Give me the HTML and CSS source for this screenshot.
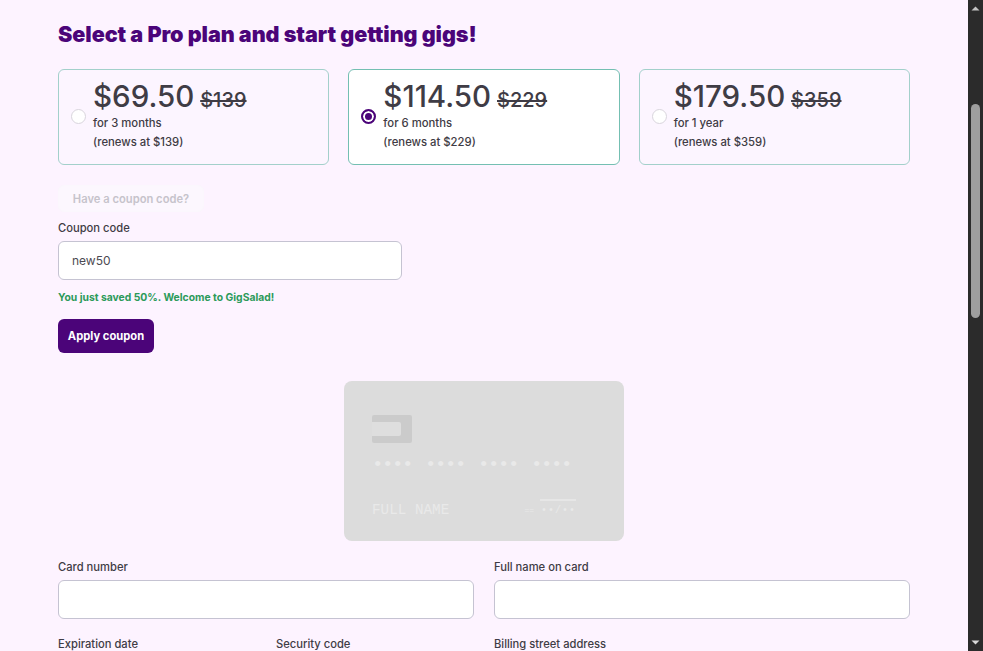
FILE: index.html
```html
<!DOCTYPE html>
<html lang="en">
<head>
  <meta charset="UTF-8">
  <title>Select a Pro plan</title>
  <link rel="stylesheet" href="styles.css">
</head>
<body>
  <div class="page">
    <main class="content">
      <h1>Select a Pro plan and start getting gigs!</h1>

      <div class="plans">
        <label class="plan">
          <span class="radio"></span>
          <span class="plan-text">
            <span class="price">$69.50 <s>$139</s></span>
            <span class="term">for 3 months</span>
            <span class="term">(renews at $139)</span>
          </span>
        </label>
        <label class="plan selected">
          <span class="radio"></span>
          <span class="plan-text">
            <span class="price">$114.50 <s>$229</s></span>
            <span class="term">for 6 months</span>
            <span class="term">(renews at $229)</span>
          </span>
        </label>
        <label class="plan">
          <span class="radio"></span>
          <span class="plan-text">
            <span class="price">$179.50 <s>$359</s></span>
            <span class="term">for 1 year</span>
            <span class="term">(renews at $359)</span>
          </span>
        </label>
      </div>

      <button class="btn-coupon-toggle">Have a coupon code?</button>

      <div class="coupon">
        <div class="label">Coupon code</div>
        <div class="input">new50</div>
        <div class="success">You just saved 50%. Welcome to GigSalad!</div>
        <button class="btn-apply">Apply coupon</button>
      </div>

      <div class="card-preview">
        <div class="chip"><span class="chip-notch"></span></div>
        <div class="card-number">
          <span>••••</span><span>••••</span><span>••••</span><span>••••</span>
        </div>
        <div class="card-bottom">
          <span class="card-name">FULL NAME</span>
          <span class="card-expiry">
            <span class="expiry-line"></span>
            <span class="expiry-row"><span class="expiry-small">==</span> ••/••</span>
          </span>
        </div>
      </div>

      <div class="fields">
        <div class="field wide">
          <div class="label">Card number</div>
          <div class="input"></div>
        </div>
        <div class="field wide">
          <div class="label">Full name on card</div>
          <div class="input"></div>
        </div>
        <div class="field">
          <div class="label">Expiration date</div>
          <div class="input"></div>
        </div>
        <div class="field">
          <div class="label">Security code</div>
          <div class="input"></div>
        </div>
        <div class="field wide">
          <div class="label">Billing street address</div>
          <div class="input"></div>
        </div>
      </div>
    </main>

    <div class="scrollbar">
      <svg class="arrow" width="15" height="17" viewBox="0 0 15 17"><path d="M3.5 10.5 7.5 6.5 11.5 10.5Z" fill="#c4c4c4"/></svg>
      <div class="track"><div class="thumb"></div></div>
      <svg class="arrow" width="15" height="17" viewBox="0 0 15 17"><path d="M3.5 6.5 7.5 10.5 11.5 6.5Z" fill="#d8d8d8"/></svg>
    </div>
  </div>
</body>
</html>
```

FILE: styles.css
```css
html, body {
  margin: 0;
  height: 100%;
  overflow: hidden;
}

body {
  font-family: Inter, 'Liberation Sans', sans-serif;
  background-color: #fdf3ff;
  color: #3f3c45;
}

.page {
  display: flex;
  height: 100vh;
  overflow: hidden;
}

.content {
  flex: 1;
  padding: 20px 58px 0;
  min-width: 0;
}

h1 {
  margin: 0 0 20px;
  color: #4b0479;
  font-size: 21.6px;
  line-height: 29px;
  font-weight: 900;
  letter-spacing: -0.08px;
}

.plans {
  display: grid;
  grid-template-columns: repeat(3, 1fr);
  gap: 19px;
}

.plan {
  display: flex;
  align-items: center;
  gap: 7px;
  height: 96px;
  box-sizing: border-box;
  padding: 0 12px;
  border: 1px solid #a3d0cb;
  border-radius: 6px;
  background-color: #fcf5ff;
}

.plan.selected {
  border-color: #74bfb2;
  background-color: #fff;
}

.radio {
  flex: none;
  width: 13px;
  height: 13px;
  margin-bottom: 2px;
  border: 1px solid #d9d5dd;
  border-radius: 50%;
  background-color: #fff;
}

.plan.selected .radio {
  border: 2px solid #4b0479;
  width: 11px;
  height: 11px;
  background-color: #4b0479;
  box-shadow: inset 0 0 0 2px #fff;
}

.plan-text {
  display: flex;
  flex-direction: column;
  margin-bottom: 3px;
}

.price {
  padding-top: 4px;
  font-size: 29.5px;
  line-height: 27px;
  font-weight: 500;
}

.price s {
  margin-left: -2px;
  font-size: 20px;
}

.term {
  font-size: 11.3px;
  line-height: 19px;
  font-weight: 500;
}

.btn-coupon-toggle {
  display: block;
  margin-top: 20px;
  height: 27px;
  width: 146px;
  padding: 0;
  border: 1px solid #fbf7fd;
  border-radius: 6px;
  background-color: #fcf7fe;
  color: #c6c3cb;
  font-family: inherit;
  font-size: 11.2px;
  font-weight: 600;
}

.coupon {
  width: 344px;
  margin-top: 8px;
}

.label {
  font-size: 11.2px;
  line-height: 16px;
  font-weight: 500;
  margin-bottom: 5px;
}

.input {
  height: 39px;
  box-sizing: border-box;
  padding: 0 13px;
  border: 1px solid #c5c3d2;
  border-radius: 6px;
  background-color: #fff;
  font-size: 12px;
  line-height: 37px;
  color: #4c4a52;
}

.success {
  margin-top: 10px;
  color: #2c9a5a;
  font-size: 10.35px;
  line-height: 14px;
  font-weight: 700;
}

.btn-apply {
  display: block;
  margin-top: 15px;
  width: 96px;
  height: 34px;
  padding: 0;
  border: none;
  border-radius: 6px;
  background-color: #4b0479;
  color: #fff;
  font-family: inherit;
  font-size: 11.2px;
  font-weight: 700;
}

.card-preview {
  width: 280px;
  height: 160px;
  box-sizing: border-box;
  margin: 28px auto 0;
  padding: 34px 28px 0;
  border-radius: 8px;
  background-color: #dcdcdc;
  color: #e9e9e9;
  font-family: 'Liberation Mono', monospace;
}

.chip {
  width: 40px;
  height: 28px;
  border-radius: 2px;
  background-color: #cbcbcb;
  display: flex;
  align-items: center;
}

.chip-notch {
  width: 29px;
  height: 14px;
  background-color: #dedede;
  border-radius: 0 2px 2px 0;
}

.card-number {
  display: flex;
  gap: 13px;
  margin-top: 13px;
  font-size: 19px;
  line-height: 18px;
  letter-spacing: -1.4px;
}

.card-bottom {
  display: flex;
  justify-content: space-between;
  align-items: flex-end;
  margin-top: 25px;
  padding-right: 20px;
}

.card-name {
  font-size: 14.3px;
  line-height: 20px;
}

.card-expiry {
  display: flex;
  flex-direction: column;
  align-items: flex-end;
  margin-bottom: 3px;
  font-size: 10px;
  line-height: 12px;
  letter-spacing: 1px;
}

.expiry-small {
  font-size: 8px;
  letter-spacing: 0;
}

.expiry-line {
  width: 36px;
  height: 2px;
  margin-bottom: 4px;
  background-color: #e6e6e6;
}

.fields {
  display: grid;
  grid-template-columns: repeat(4, 1fr);
  column-gap: 20px;
  row-gap: 17px;
  margin-top: 18px;
}

.field.wide {
  grid-column: span 2;
}

.scrollbar {
  flex: none;
  width: 15px;
  display: flex;
  flex-direction: column;
  background-color: #2b2b2b;
}

.arrow {
  flex: none;
  display: block;
}

.track {
  flex: 1;
  padding: 87px 3px 0;
}

.thumb {
  height: 214px;
  border-radius: 5px;
  background-color: #9e9e9e;
}
```
